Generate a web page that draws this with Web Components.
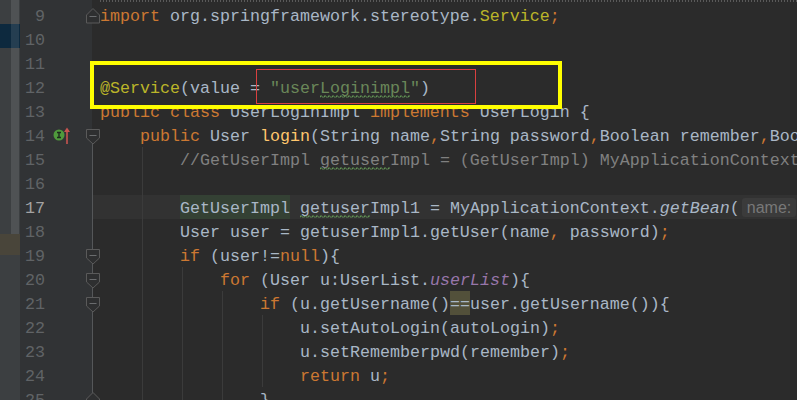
<!DOCTYPE html>
<html>
<head>
<meta charset="utf-8">
<title>UserLoginImpl</title>
<style>
  html, body { margin: 0; height: 100%; overflow: hidden; background: #2b2b2b; }
  /* syntax colours, the spans live in the light dom of code-line */
  .k { color: #cc7832; }
  .a { color: #bbb529; }
  .s { color: #6a8759; }
  .c { color: #808080; }
  .m { color: #ffc66d; }
  .p { color: #9876aa; }
  .g { background: #344134; padding: 4px 0 1px; }
  .e { background: #52503a; padding: 4px 0 1px; }
  .w { background: url("data:image/svg+xml,%3Csvg xmlns='http://www.w3.org/2000/svg' width='4' height='3'%3E%3Cpath d='M0 2.5 L1 0.5 L3 2.5 L4 1.5' fill='none' stroke='%23629755'/%3E%3C/svg%3E") repeat-x 0 100%; }
</style>
</head>
<body>
<ide-window>
  <tool-strip slot="strip"></tool-strip>
  <code-line n="9" fold="close"><span class="k">import</span> org.springframework.stereotype.<span class="a">Service</span><span class="k">;</span></code-line>
  <code-line n="10"></code-line>
  <code-line n="11"></code-line>
  <code-line n="12"><span class="a">@Service</span>(value = <span class="s">"user<span class="w">Loginimpl</span>"</span>)</code-line>
  <code-line n="13"><span class="k">public class</span> UserLoginImpl <span class="k">implements</span> UserLogin {</code-line>
  <code-line n="14" fold="open" marks indent="4" spine="start"><span class="k">public</span> User <span class="m">login</span>(String name<span class="k">,</span>String password<span class="k">,</span>Boolean remember<span class="k">,</span>Boo</code-line>
  <code-line n="15" indent="8" guides="142" spine="full"><span class="c">//GetUserImpl <span class="w">getuser</span>Impl = (GetUserImpl) MyApplicationContext</span></code-line>
  <code-line n="16" guides="142" spine="full"></code-line>
  <code-line n="17" indent="8" current guides="142" spine="full"><span class="g">GetUserImpl</span> <span class="w">getuser</span>Impl1 = MyApplicationContext.<i>getBean</i>(<param-hint>name:</param-hint></code-line>
  <code-line n="18" indent="8" guides="142" spine="full">User user = getuserImpl1.getUser(name<span class="k">,</span> password)<span class="k">;</span></code-line>
  <code-line n="19" fold="open" indent="8" guides="142" spine="full"><span class="k">if</span> (user!=<span class="k">null</span>){</code-line>
  <code-line n="20" fold="open" indent="12" guides="142 182" spine="full"><span class="k">for</span> (User u:UserList.<i class="p">userList</i>){</code-line>
  <code-line n="21" fold="open" indent="16" guides="142 182 222" spine="full"><span class="k">if</span> (u.getUsername()<span class="e">==</span>user.getUsername()){</code-line>
  <code-line n="22" indent="20" guides="142 182 222 262" spine="full">u.setAutoLogin(autoLogin)<span class="k">;</span></code-line>
  <code-line n="23" indent="20" guides="142 182 222 262" spine="full">u.setRememberpwd(remember)<span class="k">;</span></code-line>
  <code-line n="24" indent="20" guides="142 182 222 262" spine="full"><span class="k">return</span> u<span class="k">;</span></code-line>
  <code-line n="25" fold="close" indent="16" guides="142 182 222" spine="full">}</code-line>
  <mark-box slot="over" x="90" y="61" w="472" h="48" weight="4" color="#ffff00"></mark-box>
  <mark-box slot="over" x="256" y="69" w="220" h="35" weight="1" color="#d94040"></mark-box>
</ide-window>

<script>
class IdeWindow extends HTMLElement {
  constructor() {
    super();
    this.attachShadow({ mode: "open" }).innerHTML = `
      <style>
        :host { display: flex; position: relative; width: 797px; height: 400px; overflow: hidden;
          background: #2b2b2b; color: #a9b7c6; font: 16.67px/24px "Liberation Mono", monospace; }
        #main { flex: 1; min-width: 0; padding-top: 3px; position: relative;
          background: linear-gradient(90deg, #313335 72px, #2b2b2b 72px); }
        #main::before { content: ""; position: absolute; left: 80px; right: 0; top: 0; height: 2px;
          background: repeating-linear-gradient(90deg, #5a5a5a 0 1px, #2b2b2b 1px 3px); }
      </style>
      <slot name="strip"></slot>
      <div id="main"><slot></slot></div>
      <slot name="over"></slot>`;
  }
}

class ToolStrip extends HTMLElement {
  constructor() {
    super();
    this.attachShadow({ mode: "open" }).innerHTML = `
      <style>
        :host { display: grid; width: 20px; flex: none; background: #3c3f41;
          grid-template-rows: 24px 24px 186px 21px 1fr; grid-template-columns: 1fr; }
        .sel { grid-row: 2; grid-column: 1; background: #0d293e; }
        .warn { grid-row: 4; grid-column: 1; background: #49453a; }
        .thumb { grid-row: 1 / 4; grid-column: 1; width: 8px; margin-left: 11px; background: rgba(255,255,255,.1); }
      </style>
      <div class="sel"></div><div class="warn"></div><div class="thumb"></div>`;
  }
}

const foldShapes = {
  open: "M0.5 0.5 H13.5 V9 L7 15 L0.5 9 Z",
  close: "M0.5 15 V7 L7 0.5 L13.5 7 V15 Z",
};

class CodeLine extends HTMLElement {
  constructor() {
    super();
    const fold = this.getAttribute("fold");
    const guides = (this.getAttribute("guides") || "").split(" ").filter(Boolean)
      .map(x => `<b class="guide" style="left:${x - 20}px"></b>`).join("");
    const spine = this.getAttribute("spine");
    const spineEl = spine ? `<b class="spine ${spine}"></b>` : "";
    const foldIcon = fold ? `<svg class="fold ${fold}" width="14" height="16" viewBox="0 0 14 16"><path d="${foldShapes[fold]}" fill="#2e2f30" stroke="#5a5a5a"/><path d="M3.5 ${fold == "open" ? 6.5 : 8.5} H10.5" stroke="#6a6c6e"/></svg>` : "";
    const marks = this.hasAttribute("marks") ? `<svg class="marks" width="20" height="18" viewBox="0 0 20 18"><circle cx="6" cy="8" r="5.5" fill="#4f9a3c"/><path d="M4 5.5 H8 M4 10.5 H8 M6 5.5 V10.5" stroke="#1d2b1d" stroke-width="1.4"/><path d="M14 0.5 L11 5 H17 Z" fill="#c75450"/><path d="M14 4 V17" stroke="#c75450" stroke-width="1.6"/></svg>` : "";
    this.attachShadow({ mode: "open" }).innerHTML = `
      <style>
        :host { display: flex; height: 24px; position: relative; }
        :host([current]) .code { background: #323232; }
        :host([current]) .num { color: #a4a3a3; }
        .num { width: 25px; flex: none; box-sizing: border-box; padding-top: 2px; text-align: right; color: #606366; }
        .gut { width: 47px; flex: none; position: relative; }
        .marks { position: absolute; left: 8px; top: 4px; }
        .fold { position: absolute; left: 41px; z-index: 2; }
        .fold.open { top: 6px; }
        .fold.close { top: 5px; }
        .spine { position: absolute; left: 47px; width: 1px; background: #555759; z-index: 1; top: 0; bottom: 0; }
        .spine.start { top: 21px; }
        .code { flex: 1; min-width: 0; box-sizing: border-box; padding-top: 2px; white-space: pre; position: relative; overflow: visible; }
        .guide { position: absolute; top: 0; bottom: 0; width: 1px; background: #3b3b3b; }
      </style>
      <div class="num">${this.getAttribute("n")}</div>
      <div class="gut">${marks}${spineEl}${foldIcon}</div>
      <div class="code" style="padding-left:${8 + (Number(this.getAttribute("indent")) || 0) * 10}px"><slot></slot></div>
      ${guides}`;
  }
}

class ParamHint extends HTMLElement {
  constructor() {
    super();
    this.attachShadow({ mode: "open" }).innerHTML = `<style>
        :host { display: inline; margin-left: 2px; padding: 1px 5px; background: #3b3b3b; border-radius: 3px;
          color: #787878; white-space: nowrap; font: 16px/0 "Liberation Sans", sans-serif; }
      </style><slot></slot>`;
  }
}

class MarkBox extends HTMLElement {
  constructor() {
    super();
    const a = k => this.getAttribute(k);
    this.attachShadow({ mode: "open" }).innerHTML = `<style>
        :host { position: absolute; box-sizing: border-box; left: ${a("x")}px; top: ${a("y")}px;
          width: ${a("w")}px; height: ${a("h")}px; border: ${a("weight")}px solid ${a("color")}; }
      </style>`;
  }
}

customElements.define("ide-window", IdeWindow);
customElements.define("tool-strip", ToolStrip);
customElements.define("code-line", CodeLine);
customElements.define("param-hint", ParamHint);
customElements.define("mark-box", MarkBox);
</script>
</body>
</html>
